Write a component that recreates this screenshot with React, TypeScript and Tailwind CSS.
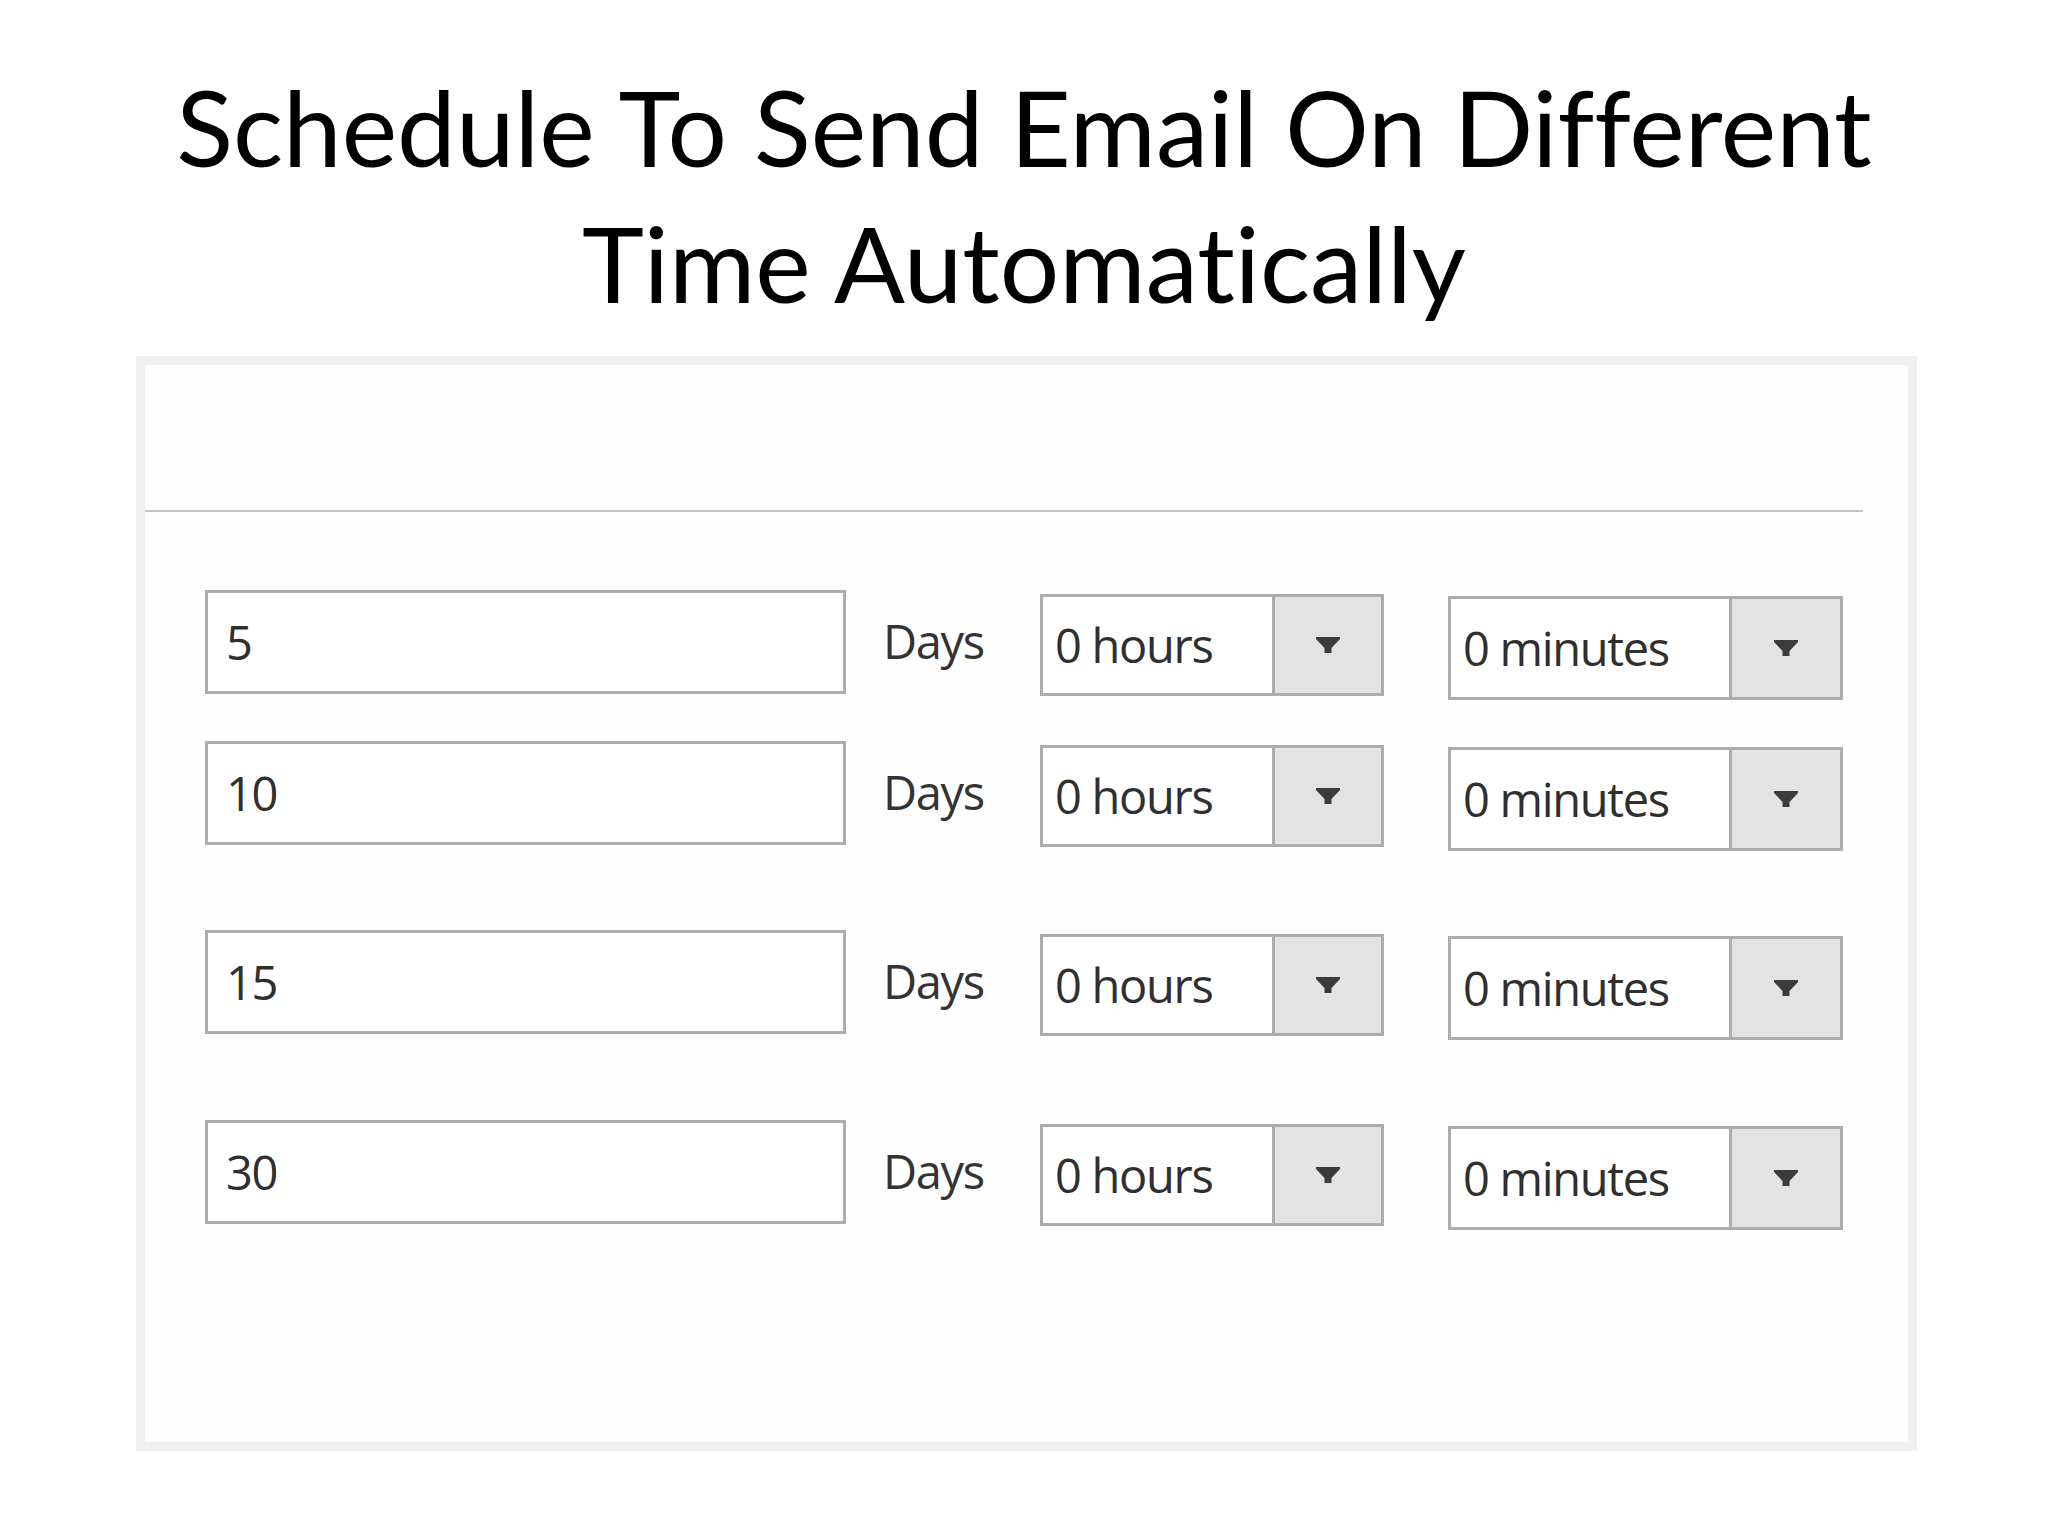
const ROWS = [
  { days: '5', gap: 'mt-[78px]' },
  { days: '10', gap: 'mt-[48px]' },
  { days: '15', gap: 'mt-[86px]' },
  { days: '30', gap: 'mt-[87px]' },
]

const formFont = { fontFamily: '"Open Sans", "DejaVu Sans", sans-serif' }

function Caret() {
  return (
    <svg width="24" height="17" viewBox="0 0 24 17" aria-hidden>
      <path d="M0 0H24V2L15.5 11V16H8.5V11L0 2Z" fill="#3b3b3b" />
    </svg>
  )
}

function Select({ label, width, height, btn, offset }: { label: string; width: string; height: string; btn: string; offset: string }) {
  return (
    <div className={`flex ${width} ${height} ${offset} box-border border-[3px] border-[#acacac] bg-white`}>
      <div className="flex flex-1 items-center pl-[12px] text-[47px] tracking-[-1.3px] text-[#2f2f2f]">{label}</div>
      <div className={`flex ${btn} items-center justify-center border-l-[3px] border-[#acacac] bg-[#e3e3e3]`}>
        <Caret />
      </div>
    </div>
  )
}

export default function App() {
  return (
    <div className="min-h-[1536px] w-[2048px] bg-white">
      <h1
        className="pt-[58px] text-center text-[105px] font-normal leading-[136px] text-black [font-variant-ligatures:none]"
        style={{ fontFamily: 'Lato, "Open Sans", sans-serif' }}
      >
        Schedule To Send Email On Different
        <br />
        Time Automatically
      </h1>

      <div className="ml-[136px] mt-[26px] box-border h-[1095px] w-[1781px] border-[9px] border-[#f0f0f0] bg-[#fefefe]" style={formFont}>
        <div className="h-[145px]" />
        <div className="h-[2px] w-[1718px] bg-[#c4c4c4]" />

        {ROWS.map((r) => (
          <div key={r.days} className={`flex h-[103px] items-start ${r.gap}`}>
            <div className="ml-[60px] box-border flex h-[104px] w-[641px] items-center border-[3px] border-[#acacac] bg-white pl-[18px] text-[47px] tracking-[-1.3px] text-[#2f2f2f]">
              {r.days}
            </div>
            <div className="ml-[37px] flex h-[103px] w-[157px] items-center text-[47px] tracking-[-1.3px] text-[#333]">Days</div>
            <Select label="0 hours" width="w-[344px]" height="h-[102px]" btn="w-[109px]" offset="mt-[4px]" />
            <Select label="0 minutes" width="ml-[64px] w-[395px]" height="h-[104px]" btn="w-[111px]" offset="mt-[6px]" />
          </div>
        ))}
      </div>
    </div>
  )
}
